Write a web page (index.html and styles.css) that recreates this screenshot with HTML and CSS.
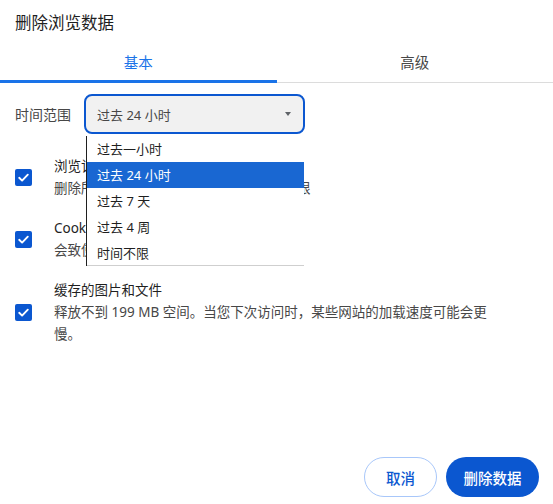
FILE: index.html
```html
<!DOCTYPE html>
<html lang="zh-CN">
<head>
<meta charset="utf-8">
<title>删除浏览数据</title>
<link rel="stylesheet" href="styles.css">
</head>
<body>
<div class="dialog">
  <h1 class="title">删除浏览数据</h1>
  <div class="tabs">
    <div class="tab active">基本</div>
    <div class="tab">高级</div>
  </div>
  <div class="range-row">
    <span class="range-label">时间范围</span>
    <div class="select-wrap">
      <div class="select">
        <span class="select-value">过去 24 小时</span>
        <span class="arrow"></span>
      </div>
      <ul class="menu">
        <li class="menu-item">过去一小时</li>
        <li class="menu-item selected">过去 24 小时</li>
        <li class="menu-item">过去 7 天</li>
        <li class="menu-item">过去 4 周</li>
        <li class="menu-item">时间不限</li>
      </ul>
    </div>
  </div>
  <div class="options">
    <div class="option">
      <span class="checkbox"><svg viewBox="0 0 17 17" width="17" height="17"><path d="M4.2 8.8l2.9 2.8 5.7-5.9" fill="none" stroke="#fff" stroke-width="1.9" stroke-linecap="round" stroke-linejoin="round"/></svg></span>
      <div class="option-text">
        <div class="option-title">浏览记录</div>
        <div class="option-desc">删除所有已登录设备上的记录，无时间期限</div>
      </div>
    </div>
    <div class="option">
      <span class="checkbox"><svg viewBox="0 0 17 17" width="17" height="17"><path d="M4.2 8.8l2.9 2.8 5.7-5.9" fill="none" stroke="#fff" stroke-width="1.9" stroke-linecap="round" stroke-linejoin="round"/></svg></span>
      <div class="option-text">
        <div class="option-title">Cookie 及其他网站数据</div>
        <div class="option-desc">会致使您从大多数网站退出。</div>
      </div>
    </div>
    <div class="option">
      <span class="checkbox"><svg viewBox="0 0 17 17" width="17" height="17"><path d="M4.2 8.8l2.9 2.8 5.7-5.9" fill="none" stroke="#fff" stroke-width="1.9" stroke-linecap="round" stroke-linejoin="round"/></svg></span>
      <div class="option-text">
        <div class="option-title">缓存的图片和文件</div>
        <div class="option-desc">释放不到 199 MB 空间。当您下次访问时，某些网站的加载速度可能会更慢。</div>
      </div>
    </div>
  </div>
  <div class="footer">
    <button class="btn btn-cancel">取消</button>
    <button class="btn btn-primary">删除数据</button>
  </div>
</div>
</body>
</html>
```

FILE: styles.css
```css
* { box-sizing: border-box; }
html, body {
  margin: 0;
  padding: 0;
  background: #ffffff;
}
body {
  font-family: "Noto Sans", "Noto Sans CJK SC", sans-serif;
  color: #1f1f1f;
}
.dialog {
  width: 553px;
  height: 504px;
  display: flex;
  flex-direction: column;
  background: #fff;
}
.title {
  margin: 0;
  padding: 12px 15px 0;
  font-size: 16.5px;
  line-height: 22px;
  font-weight: 400;
  color: #1f1f1f;
}
.tabs {
  margin-top: 6px;
  display: flex;
  height: 43px;
  border-bottom: 1px solid #dcdcdc;
}
.tab {
  flex: 1;
  position: relative;
  display: flex;
  align-items: center;
  justify-content: center;
  font-size: 14.5px;
  color: #474747;
}
.tab.active {
  color: #1a73e8;
}
.tab.active::after {
  content: "";
  position: absolute;
  left: 0;
  right: 0;
  bottom: -1px;
  height: 3px;
  background: #1a73e8;
}
.range-row {
  margin-top: 11px;
  padding-left: 15px;
  display: flex;
  align-items: center;
  gap: 13px;
}
.range-label {
  font-size: 14px;
  color: #474747;
  width: 56px;
  white-space: nowrap;
}
.select-wrap {
  position: relative;
  width: 221px;
}
.select {
  height: 40px;
  border: 2px solid #0b57d0;
  border-radius: 8px;
  background: #f1f1f1;
  display: flex;
  align-items: center;
  justify-content: space-between;
  padding: 0 11px 0 11px;
  font-size: 13px;
  color: #474747;
}
.arrow {
  width: 0;
  height: 0;
  border-left: 3.5px solid transparent;
  border-right: 3.5px solid transparent;
  border-top: 4px solid #5f6368;
  margin-right: 1px;
}
.menu {
  position: absolute;
  left: 2px;
  top: 42px;
  width: 218px;
  height: 130px;
  margin: 0;
  padding: 0;
  list-style: none;
  background: #fff;
  border-left: 1px solid #1f1f1f;
  box-shadow: inset 0 -1px 0 #cfcfcf;
  overflow: hidden;
  z-index: 5;
}
.menu-item {
  height: 26px;
  line-height: 26px;
  padding-left: 10px;
  font-size: 13px;
  color: #1f1f1f;
}
.menu-item.selected {
  background: #1967d2;
  color: #fff;
}
.options {
  margin-top: 21px;
  padding-left: 15px;
  display: flex;
  flex-direction: column;
  gap: 18px;
}
.option {
  display: flex;
  align-items: center;
  gap: 22px;
}
.checkbox {
  flex: none;
  width: 17px;
  height: 17px;
  border-radius: 2px;
  background: #0b57d0;
  display: flex;
}
.option-text {
  width: 436px;
}
.option-title {
  font-size: 13.5px;
  line-height: 22px;
  color: #1f1f1f;
  white-space: nowrap;
}
.option-desc {
  font-size: 13.5px;
  line-height: 22px;
  color: #474747;
}
.footer {
  margin-top: auto;
  display: flex;
  justify-content: flex-end;
  gap: 9px;
  padding: 0 14px 7px;
}
.btn {
  height: 40px;
  border-radius: 20px;
  font-family: "Noto Sans", "Noto Sans CJK SC", sans-serif;
  font-size: 14.5px;
  font-weight: 500;
  cursor: pointer;
}
.btn-cancel {
  padding: 0 21px;
  background: #fff;
  border: 1px solid #a8c7fa;
  color: #0b57d0;
}
.btn-primary {
  padding: 0 17.5px;
  background: #0b57d0;
  border: none;
  color: #fff;
}
```
